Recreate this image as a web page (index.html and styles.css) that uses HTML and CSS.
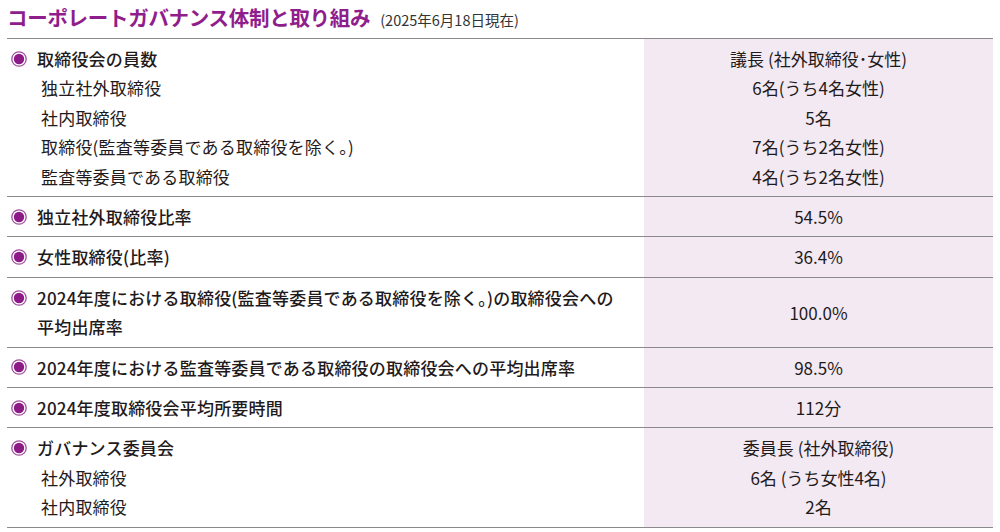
FILE: index.html
```html
<!DOCTYPE html>
<html lang="ja">
<head>
<meta charset="utf-8">
<link rel="stylesheet" href="styles.css">
</head>
<body>
<div class="page">
  <h1 class="title">コーポレートガバナンス体制と取り組み<span class="date">(2025年6月18日現在)</span></h1>
  <div class="table">
    <div class="row">
      <div class="label">
        <div class="head"><svg class="bullet" viewBox="0 0 16 16"><circle cx="8" cy="8" r="7.2" fill="#fff" stroke="#a24f9f" stroke-width="1.3"/><circle cx="8" cy="8" r="5.2" fill="#8c1a87"/></svg>取締役会の員数</div>
        <div class="sub">独立社外取締役</div>
        <div class="sub">社内取締役</div>
        <div class="sub">取締役(監査等委員である取締役を除く。)</div>
        <div class="sub">監査等委員である取締役</div>
      </div>
      <div class="value">
        <div>議長 (社外取締役･女性)</div>
        <div>6名(うち4名女性)</div>
        <div>5名</div>
        <div>7名(うち2名女性)</div>
        <div>4名(うち2名女性)</div>
      </div>
    </div>
    <div class="row">
      <div class="label">
        <div class="head"><svg class="bullet" viewBox="0 0 16 16"><circle cx="8" cy="8" r="7.2" fill="#fff" stroke="#a24f9f" stroke-width="1.3"/><circle cx="8" cy="8" r="5.2" fill="#8c1a87"/></svg>独立社外取締役比率</div>
      </div>
      <div class="value"><div>54.5%</div></div>
    </div>
    <div class="row">
      <div class="label">
        <div class="head"><svg class="bullet" viewBox="0 0 16 16"><circle cx="8" cy="8" r="7.2" fill="#fff" stroke="#a24f9f" stroke-width="1.3"/><circle cx="8" cy="8" r="5.2" fill="#8c1a87"/></svg>女性取締役(比率)</div>
      </div>
      <div class="value"><div>36.4%</div></div>
    </div>
    <div class="row">
      <div class="label">
        <div class="head"><svg class="bullet" viewBox="0 0 16 16"><circle cx="8" cy="8" r="7.2" fill="#fff" stroke="#a24f9f" stroke-width="1.3"/><circle cx="8" cy="8" r="5.2" fill="#8c1a87"/></svg>2024年度における取締役(監査等委員である取締役を除く。)の取締役会への</div>
        <div class="cont">平均出席率</div>
      </div>
      <div class="value"><div>100.0%</div></div>
    </div>
    <div class="row">
      <div class="label">
        <div class="head"><svg class="bullet" viewBox="0 0 16 16"><circle cx="8" cy="8" r="7.2" fill="#fff" stroke="#a24f9f" stroke-width="1.3"/><circle cx="8" cy="8" r="5.2" fill="#8c1a87"/></svg>2024年度における監査等委員である取締役の取締役会への平均出席率</div>
      </div>
      <div class="value"><div>98.5%</div></div>
    </div>
    <div class="row">
      <div class="label">
        <div class="head"><svg class="bullet" viewBox="0 0 16 16"><circle cx="8" cy="8" r="7.2" fill="#fff" stroke="#a24f9f" stroke-width="1.3"/><circle cx="8" cy="8" r="5.2" fill="#8c1a87"/></svg>2024年度取締役会平均所要時間</div>
      </div>
      <div class="value"><div>112分</div></div>
    </div>
    <div class="row">
      <div class="label">
        <div class="head"><svg class="bullet" viewBox="0 0 16 16"><circle cx="8" cy="8" r="7.2" fill="#fff" stroke="#a24f9f" stroke-width="1.3"/><circle cx="8" cy="8" r="5.2" fill="#8c1a87"/></svg>ガバナンス委員会</div>
        <div class="sub">社外取締役</div>
        <div class="sub">社内取締役</div>
      </div>
      <div class="value">
        <div>委員長 (社外取締役)</div>
        <div>6名 (うち女性4名)</div>
        <div>2名</div>
      </div>
    </div>
  </div>
</div>
</body>
</html>
```

FILE: styles.css
```css
* { box-sizing: border-box; }
html, body {
  margin: 0;
  padding: 0;
  background: #fff;
}
body {
  font-family: "Noto Sans CJK JP", "Noto Sans", sans-serif;
  color: #1f1a1b;
}
.page {
  padding: 2px 7px 0 7px;
  width: 1000px;
}
.title {
  margin: 0;
  font-size: 20.5px;
  line-height: 30px;
  font-weight: 700;
  color: #8f1d8b;
  padding-bottom: 3px;
  letter-spacing: -0.3px;
}
.date {
  font-size: 14.5px;
  font-weight: 400;
  color: #333;
  margin-left: 10px;
  letter-spacing: 0;
}
.table {
  width: 986px;
  border-top: 1px solid #8a8a8a;
}
.row {
  display: grid;
  grid-template-columns: 637px 349px;
  border-bottom: 1px solid #8a8a8a;
}
.label {
  padding: 5px 0 5px 4px;
  font-size: 17px;
  line-height: 29.4px;
  letter-spacing: 0.2px;
}
.head {
  display: flex;
  align-items: center;
  font-weight: 500;
  white-space: nowrap;
}
.bullet {
  width: 16px;
  height: 16px;
  margin-right: 10px;
  flex: none;
}
.sub {
  padding-left: 30px;
}
.cont {
  padding-left: 26px;
  font-weight: 500;
}
.value {
  background: #f2e9f3;
  padding: 5px 0;
  font-size: 17px;
  line-height: 29.4px;
  text-align: center;
  display: flex;
  flex-direction: column;
  justify-content: center;
}
```
